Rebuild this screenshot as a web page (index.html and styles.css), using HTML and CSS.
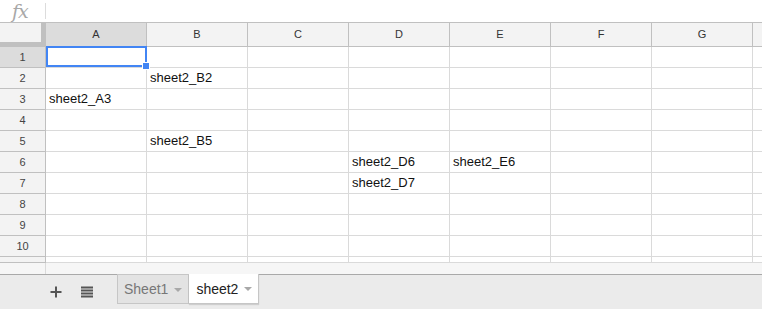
FILE: index.html
```html
<!DOCTYPE html>
<html>
<head>
<meta charset="utf-8">
<link rel="stylesheet" href="styles.css">
</head>
<body>
<div class="app">
  <div class="formula">
    <div class="fx">fx</div>
    <div class="fdiv"></div>
  </div>
  <div class="sheet">
    <div class="corner"><div class="corner-in"></div></div>
    <div class="ch sel">A</div><div class="ch">B</div><div class="ch">C</div><div class="ch">D</div><div class="ch">E</div><div class="ch">F</div><div class="ch">G</div><div class="ch last"></div>

    <div class="rh sel r1">1</div><div class="c r1 active"><div class="selbox"><div class="handle"></div></div></div><div class="c r1"></div><div class="c r1"></div><div class="c r1"></div><div class="c r1"></div><div class="c r1"></div><div class="c r1"></div><div class="c r1 last"></div>

    <div class="rh">2</div><div class="c"></div><div class="c">sheet2_B2</div><div class="c"></div><div class="c"></div><div class="c"></div><div class="c"></div><div class="c"></div><div class="c last"></div>

    <div class="rh">3</div><div class="c">sheet2_A3</div><div class="c"></div><div class="c"></div><div class="c"></div><div class="c"></div><div class="c"></div><div class="c"></div><div class="c last"></div>

    <div class="rh">4</div><div class="c"></div><div class="c"></div><div class="c"></div><div class="c"></div><div class="c"></div><div class="c"></div><div class="c"></div><div class="c last"></div>

    <div class="rh">5</div><div class="c"></div><div class="c">sheet2_B5</div><div class="c"></div><div class="c"></div><div class="c"></div><div class="c"></div><div class="c"></div><div class="c last"></div>

    <div class="rh">6</div><div class="c"></div><div class="c"></div><div class="c"></div><div class="c">sheet2_D6</div><div class="c">sheet2_E6</div><div class="c"></div><div class="c"></div><div class="c last"></div>

    <div class="rh">7</div><div class="c"></div><div class="c"></div><div class="c"></div><div class="c">sheet2_D7</div><div class="c"></div><div class="c"></div><div class="c"></div><div class="c last"></div>

    <div class="rh">8</div><div class="c"></div><div class="c"></div><div class="c"></div><div class="c"></div><div class="c"></div><div class="c"></div><div class="c"></div><div class="c last"></div>

    <div class="rh">9</div><div class="c"></div><div class="c"></div><div class="c"></div><div class="c"></div><div class="c"></div><div class="c"></div><div class="c"></div><div class="c last"></div>

    <div class="rh">10</div><div class="c"></div><div class="c"></div><div class="c"></div><div class="c"></div><div class="c"></div><div class="c"></div><div class="c"></div><div class="c last"></div>

    <div class="rh part"></div><div class="c part"></div><div class="c part"></div><div class="c part"></div><div class="c part"></div><div class="c part"></div><div class="c part"></div><div class="c part"></div><div class="c part last"></div>
  </div>
  <div class="hscroll"><div class="hs-left"></div><div class="hs-right"></div></div>
  <div class="tabbar">
    <div class="tools">
      <svg class="ico" width="12" height="12" viewBox="0 0 12 12"><path d="M6 0.5V11.5M0.5 6H11.5" stroke="#555" stroke-width="2" fill="none"/></svg>
      <svg class="ico list" width="12" height="12" viewBox="0 0 12 12"><rect x="0" y="0.5" width="12" height="2" fill="#555"/><rect x="0" y="3.5" width="12" height="2" fill="#555"/><rect x="0" y="6.5" width="12" height="2" fill="#555"/><rect x="0" y="9.5" width="12" height="2" fill="#555"/></svg>
    </div>
    <div class="tab">
      <span class="tname">Sheet1</span><span class="arrow"></span>
    </div>
    <div class="tab active">
      <span class="tname">sheet2</span><span class="arrow"></span>
    </div>
  </div>
</div>
</body>
</html>
```

FILE: styles.css
```css
html, body {
  margin: 0;
  padding: 0;
  background: #fff;
}
body {
  width: 762px;
  height: 309px;
  overflow: hidden;
  font-family: "Liberation Sans", Arial, sans-serif;
}
.app {
  display: flex;
  flex-direction: column;
  width: 762px;
  height: 309px;
}
.formula {
  height: 22px;
  display: flex;
  align-items: center;
  background: #fff;
}
.fx {
  width: 45px;
  box-sizing: border-box;
  padding-left: 12px;
  font-family: "DejaVu Serif", "Liberation Serif", serif;
  font-style: italic;
  font-size: 19px;
  line-height: 22px;
  color: #a8a8a8;
  letter-spacing: -1px;
}
.fdiv {
  width: 1px;
  height: 16px;
  background: #dcdcdc;
}
.sheet {
  display: grid;
  grid-template-columns: 46px repeat(7, 101px) 1fr;
  grid-template-rows: 25px repeat(10, 21px) 6px;
}
.corner {
  background: #c0c0c0;
  border-top: 1px solid #c0c0c0;
  box-sizing: border-box;
}
.corner-in {
  width: 41px;
  height: 19px;
  background: #f3f3f3;
}
.ch {
  box-sizing: border-box;
  background: #f3f3f3;
  border-top: 1px solid #c0c0c0;
  border-bottom: 1px solid #c0c0c0;
  border-right: 1px solid #c0c0c0;
  font-size: 11px;
  line-height: 23px;
  text-align: center;
  color: #333;
}
.ch.sel, .rh.sel {
  background: #dcdcdc;
}
.ch.last {
  border-right: none;
}
.rh {
  box-sizing: border-box;
  background: #f3f3f3;
  border-right: 1px solid #c0c0c0;
  border-bottom: 1px solid #c0c0c0;
  font-size: 11px;
  line-height: 20px;
  text-align: center;
  color: #444;
}
.c {
  box-sizing: border-box;
  border-right: 1px solid #dadada;
  border-bottom: 1px solid #dadada;
  font-size: 13px;
  line-height: 20px;
  padding-left: 3px;
  color: #111;
  white-space: nowrap;
}
.c.last {
  border-right: none;
}
.active {
  position: relative;
}
.selbox {
  position: absolute;
  left: 0;
  top: -1px;
  right: -1px;
  bottom: 0;
  border: 2px solid #4285f4;
  box-sizing: border-box;
}
.handle {
  position: absolute;
  right: -5px;
  bottom: -5px;
  width: 6px;
  height: 6px;
  background: #4285f4;
  border: 1px solid #fff;
}
.hscroll {
  height: 11px;
  display: flex;
  background: #f6f6f6;
}
.hs-left {
  width: 45px;
  border-right: 1px solid #dadada;
}
.hscroll .hs-right {
  flex: 1;
}
.tabbar {
  flex: 1;
  display: flex;
  align-items: flex-start;
  background: #ebebeb;
  border-top: 1px solid #a9a9a9;
}
.tools {
  display: flex;
  align-items: center;
  gap: 19px;
  padding-left: 50px;
  padding-top: 10px;
  width: 67px;
}
.ico {
  display: block;
}
.list {
  margin-top: 1px;
}
.tab {
  margin-top: -1px;
  height: 30px;
  box-sizing: border-box;
  display: flex;
  align-items: center;
  padding: 0 6px 0 6px;
  background: #e3e3e3;
  border: 1px solid #c6c6c6;
  font-size: 14px;
  color: #777;
}
.tab.active {
  background: #fff;
  color: #222;
  border-top: none;
  border-left: none;
  padding-left: 7px;
  box-shadow: 0 1px 1px rgba(0,0,0,0.12);
}
.arrow {
  width: 0;
  height: 0;
  margin-left: 6px;
  border-left: 4px solid transparent;
  border-right: 4px solid transparent;
  border-top: 4px solid #a8a8a8;
  margin-top: 1px;
}
```
